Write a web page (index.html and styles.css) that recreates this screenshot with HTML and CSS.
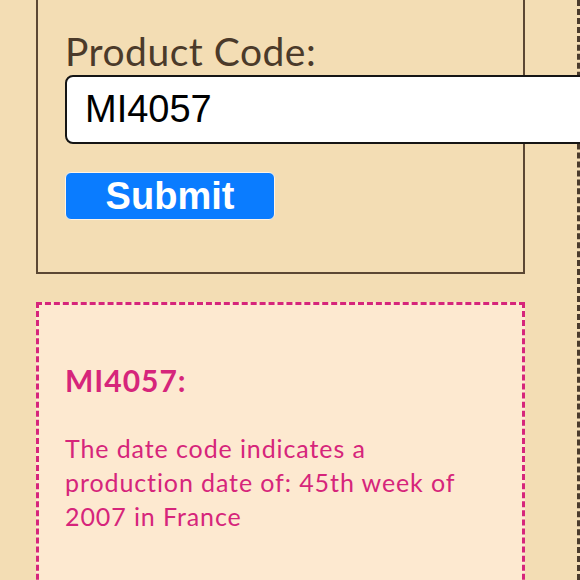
FILE: index.html
```html
<!DOCTYPE html>
<html>
<head>
<meta charset="utf-8">
<link rel="stylesheet" href="styles.css">
</head>
<body>
<div class="page">
  <main class="main">
    <form class="lookup">
      <label class="lookup-label" for="code">Product Code:</label>
      <input class="lookup-input" id="code" type="text" value="MI4057">
      <button class="lookup-submit" type="button">Submit</button>
    </form>
    <section class="result">
      <h2 class="result-title">MI4057:</h2>
      <p class="result-text">The date code indicates a production date of: 45th week of 2007 in France</p>
    </section>
  </main>
  <aside class="side"></aside>
</div>
</body>
</html>
```
FILE: styles.css
```css
html, body {
  margin: 0;
  padding: 0;
  background: #f3ddb4;
  overflow: hidden;
}
.page {
  display: flex;
  width: 580px;
  height: 580px;
  overflow: hidden;
}
.main {
  width: 577px;
  flex: none;
  padding-left: 36px;
  box-sizing: border-box;
  position: relative;
  z-index: 1;
}
.side {
  flex: 1;
  border-left: 3px dashed #4a3b2c;
}
.lookup {
  width: 489px;
  box-sizing: border-box;
  border: 2px solid #5b4733;
  border-top: none;
  padding: 29px 0 52px 27px;
  display: flex;
  flex-direction: column;
  align-items: flex-start;
}
.lookup-label {
  font-family: Lato, "Noto Sans", sans-serif;
  font-size: 39px;
  letter-spacing: 0.5px;
  line-height: 44px;
  color: #4b3a2a;
  margin-left: 0;
}
.lookup-input {
  margin-top: 2px;
  width: 560px;
  height: 69px;
  box-sizing: border-box;
  border: 2px solid #151515;
  border-radius: 8px;
  background: #fff;
  padding: 0 0 0 18px;
  font-family: "Liberation Sans", Arial, sans-serif;
  font-size: 38px;
  color: #000;
  outline: none;
}
.lookup-submit {
  margin-top: 28px;
  width: 210px;
  height: 48px;
  box-sizing: border-box;
  background: #0a7cff;
  border: 1px solid #fdf3e6;
  border-radius: 6px;
  color: #fff;
  font-family: "Liberation Sans", Arial, sans-serif;
  font-weight: bold;
  font-size: 38px;
  line-height: 44px;
  padding: 0;
}
.result {
  width: 489px;
  box-sizing: border-box;
  margin-top: 28px;
  border: 3px dashed #d6257b;
  background: #fde9d0;
  padding: 58px 26px 80px 26px;
  color: #d6257b;
  font-family: Lato, "Noto Sans", sans-serif;
}
.result-title {
  margin: 0;
  font-size: 30px;
  letter-spacing: 1px;
  line-height: 34px;
  font-weight: bold;
}
.result-text {
  margin: 34px 0 0 0;
  font-size: 25px;
  letter-spacing: 0.9px;
  line-height: 34px;
}
```
